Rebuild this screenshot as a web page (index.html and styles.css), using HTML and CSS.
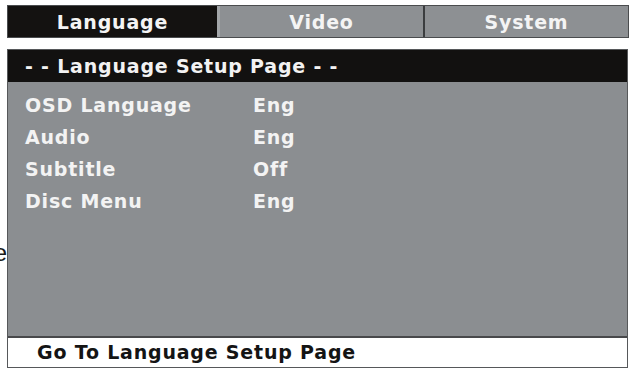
FILE: index.html
```html
<!DOCTYPE html>
<html lang="en">
<head>
    <meta charset="UTF-8">
    <meta name="viewport" content="width=device-width, initial-scale=1.0">
    <title>Setup Menu</title>
    <link rel="stylesheet" href="styles.css">
</head>
<body>
    <div class="screen">
        <div class="tabs">
            <div class="tab active">Language</div>
            <div class="tab video">Video</div>
            <div class="tab system">System</div>
        </div>
        <div class="body-row">
            <div class="gutter"><span>e</span></div>
            <div class="panel">
                <div class="panel-title">- - Language Setup Page - -</div>
                <div class="options">
                    <div class="option"><span class="label">OSD Language</span><span class="value">Eng</span></div>
                    <div class="option"><span class="label">Audio</span><span class="value">Eng</span></div>
                    <div class="option"><span class="label">Subtitle</span><span class="value">Off</span></div>
                    <div class="option"><span class="label">Disc Menu</span><span class="value">Eng</span></div>
                </div>
                <div class="hint">Go To Language Setup Page</div>
            </div>
        </div>
    </div>
</body>
</html>
```

FILE: styles.css
```css
body {
    margin: 0;
    padding: 0;
    background-color: #ffffff;
    font-family: "DejaVu Sans", "Liberation Sans", sans-serif;
    font-weight: bold;
    letter-spacing: 0.8px;
}
.screen {
    width: 631px;
    height: 373px;
    padding-top: 5px;
    box-sizing: border-box;
}
.tabs {
    display: grid;
    grid-template-columns: 209px 206px 1fr;
    height: 33px;
    margin-left: 7px;
    margin-right: 2px;
    border: 1px solid #4a4c4e;
    box-sizing: border-box;
    background-color: #8d9093;
}
.tab {
    display: flex;
    align-items: center;
    justify-content: center;
    color: #f4f4f4;
    font-size: 19px;
}
.tab.active {
    background-color: #141211;
}
.tab.video {
    border-left: 3px solid #a3a6a9;
}
.tab.system {
    border-left: 2px solid #3b3d3f;
}
.body-row {
    display: flex;
    margin-top: 11px;
    height: 319px;
}
.gutter {
    width: 7px;
    overflow: hidden;
    direction: rtl;
    padding-top: 190px;
    font-size: 24px;
    font-weight: normal;
    letter-spacing: 0;
    color: #1a1a1a;
    font-family: "Liberation Sans", sans-serif;
}
.gutter span {
    display: block;
}
.panel {
    width: 621px;
    display: flex;
    flex-direction: column;
    border: 1px solid #56585a;
    box-sizing: border-box;
}
.panel-title {
    height: 32px;
    background-color: #121110;
    color: #f2f2f2;
    font-size: 19px;
    line-height: 32px;
    padding-left: 17px;
}
.options {
    flex: 1;
    background-color: #8b8e91;
    padding-top: 7px;
    padding-left: 17px;
}
.option {
    display: flex;
    height: 32px;
    line-height: 32px;
    font-size: 19px;
    color: #f3f3f3;
}
.label {
    width: 228px;
}
.hint {
    height: 29px;
    line-height: 29px;
    border-top: 2px solid #48494b;
    background-color: #ffffff;
    color: #141414;
    font-size: 19px;
    padding-left: 29px;
}
```
